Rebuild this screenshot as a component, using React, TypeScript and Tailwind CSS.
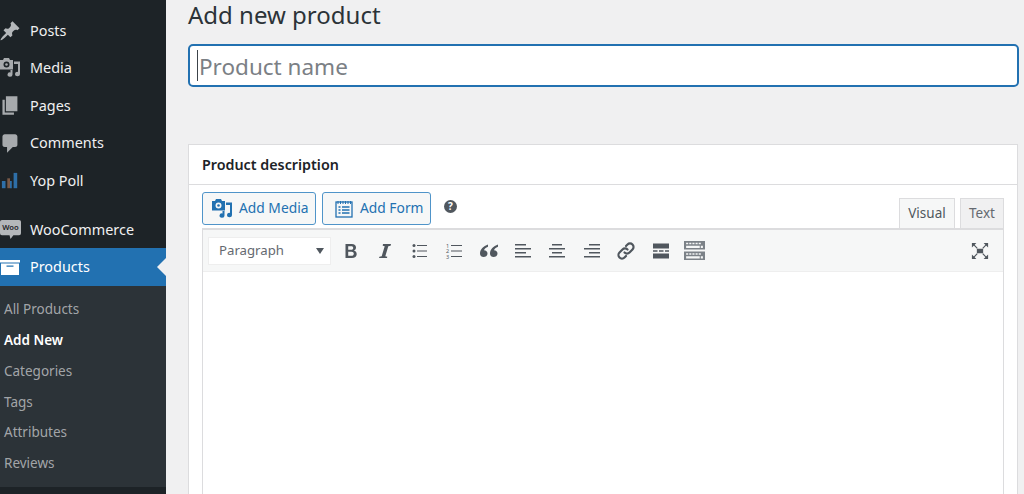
import type { ReactNode } from "react";

const font = { fontFamily: '"Noto Sans", "Open Sans", sans-serif' };

function PinIcon() {
  return (
    <svg viewBox="0 0 20 20" className="w-[22px] h-[22px] text-[#b4b7ba]" fill="currentColor">
      <path d="M10.440 3.020l1.820-1.820 6.360 6.350-1.830 1.820c-1.050-.68-2.480-.57-3.410.36l-.75.75c-.92.930-1.040 2.350-.35 3.410l-1.830 1.820-2.410-2.410-2.800 2.790c-.42.420-3.380 2.710-3.800 2.290s1.860-3.390 2.280-3.810l2.790-2.790L4.100 9.360l1.830-1.820c1.050.690 2.480.570 3.400-.36l.75-.75c.930-.92 1.050-2.350.360-3.410z" />
    </svg>
  );
}

function MediaIcon({ className }: { className: string }) {
  return (
    <svg viewBox="0 0 20 20" className={className} fill="currentColor">
      <path fillRule="evenodd" d="M4 0h5l1 2h3v9.500H0V2h3zM6.500 3.500a3 3 0 100 6 3 3 0 000-6z" />
      <circle cx="6.500" cy="6.500" r="1.300" />
      <path d="M14 3.500h6v12.500a2.500 2.200 0 11-2-2.100V6h-4z" />
      <path d="M10.500 12h2v4.500a2.500 2.200 0 11-2-2.100z" />
    </svg>
  );
}

function PagesIcon() {
  return (
    <svg viewBox="0 0 20 20" className="w-[23px] h-[23px] text-[#a7aaad]" fill="currentColor">
      <path d="M6 15V2h10v13H6zm-1 1h8v2H3V5h2v11z" />
    </svg>
  );
}

function CommentIcon() {
  return (
    <svg viewBox="0 0 20 20" className="w-[23px] h-[23px] text-[#a7aaad]" fill="currentColor">
      <path d="M5 2h9c1.100 0 2 .9 2 2v7c0 1.100-.9 2-2 2h-2l-5 5v-5H5c-1.100 0-2-.9-2-2V4c0-1.100.9-2 2-2z" />
    </svg>
  );
}

function PollIcon() {
  return (
    <svg viewBox="0 0 20 20" className="w-[18px] h-[18px]">
      <path fill="#2e6fa8" d="M1 10h4v8H1z" />
      <path fill="#7a5a48" d="M7 7h3v11H7z" />
      <path fill="#2e6fa8" d="M10 10h2v8h-2z" />
      <path fill="#2e6fa8" d="M14 1h4v17h-4z" />
    </svg>
  );
}

function WooIcon() {
  return (
    <svg viewBox="0 0 22 22" className="w-[21px] h-[21px]">
      <path fill="#b4b7ba" d="M2 1h18a2 2 0 012 2v12a2 2 0 01-2 2h-6l-3 4-1-4H2a2 2 0 01-2-2V3a2 2 0 012-2z" />
      <text x="11" y="12" textAnchor="middle" fontSize="8" fontWeight="600" fill="#1d2327" style={font}>Woo</text>
    </svg>
  );
}

function ProductsIcon() {
  return (
    <svg viewBox="0 0 20 15" className="w-[20px] h-[15px]" fill="#fff">
      <path d="M0 0h20v2.500H0z" />
      <path fillRule="evenodd" d="M1 3.500h18V15H1zM6.500 5.500v1.300h7V5.500z" />
    </svg>
  );
}

function MenuRow({ icon, label, className = "h-[37.500px]" }: { icon: ReactNode; label: string; className?: string }) {
  return (
    <div className={`${className} flex items-center text-[14.400px] text-[#f0f0f1]`}>
      <span className="w-[24px] shrink-0 flex justify-center -ml-[2px] mr-[8px]">{icon}</span>
      {label}
    </div>
  );
}

function Sidebar() {
  const sub = ["All Products", "Add New", "Categories", "Tags", "Attributes", "Reviews"];
  return (
    <aside className="w-[166px] shrink-0 bg-[#1d2327] h-[494px] overflow-hidden pt-[12px]">
      <MenuRow icon={<PinIcon />} label="Posts" />
      <MenuRow icon={<MediaIcon className="w-[20px] h-[20px] text-[#a7aaad]" />} label="Media" />
      <MenuRow icon={<PagesIcon />} label="Pages" />
      <MenuRow icon={<CommentIcon />} label="Comments" />
      <MenuRow icon={<PollIcon />} label="Yop Poll" />
      <div className="h-[12px]" />
      <MenuRow icon={<WooIcon />} label="WooCommerce" className="h-[36.500px]" />
      <div className="relative h-[38px] bg-[#2271b1] flex items-center text-[14.400px] text-white">
        <span className="w-[24px] shrink-0 flex justify-center -ml-[2px] mr-[8px]"><ProductsIcon /></span>
        Products
        <span className="absolute right-0 top-[10px] w-0 h-0 border-y-[9px] border-y-transparent border-r-[9px] border-r-[#f0f0f1]" />
      </div>
      <div className="bg-[#2c3338] h-[201px] pt-[8px]">
        {sub.map((s) => (
          <div
            key={s}
            className={`h-[30.800px] flex items-center pl-[4px] text-[13.500px] ${s === "Add New" ? "text-white font-semibold" : "text-[#c3c4c7]/80"}`}
          >
            {s}
          </div>
        ))}
      </div>
    </aside>
  );
}

function FormIcon() {
  return (
    <svg viewBox="0 0 18 18" className="w-[18px] h-[18px] text-[#2271b1]" fill="none" stroke="currentColor" strokeWidth="1.300">
      <rect x="1" y="2" width="16" height="15" />
      <path d="M3 1v3M5.500 1v3M8 1v3M10.500 1v3M13 1v3M15.500 1v3" strokeWidth="1" />
      <path d="M3.500 7h2M7 7h7.500M3.500 10h2M7 10h7.500M3.500 13h2M7 13h7.500" strokeWidth="1.500" />
    </svg>
  );
}

function Toolbar() {
  const c = "w-[20px] h-[20px] text-[#50575e]";
  return (
    <div className="h-[44px] bg-[#f6f7f7] border-t-2 border-b border-t-[#dcdcde] border-b-[#eeeeee] flex items-center pl-[5px] pr-[13px]">
      <div className="w-[123px] h-[28px] mt-[1px] bg-white border border-[#eeeeee] flex items-center justify-between pl-[10px] pr-[6px] text-[13.200px] text-[#646970]">
        Paragraph
        <span className="w-0 h-0 border-x-[4px] border-x-transparent border-t-[6px] border-t-[#50575e]" />
      </div>
      <div className="flex items-center gap-[14.400px] ml-[10px]">
        <svg viewBox="0 0 20 20" className={c} fill="currentColor">
          <path fillRule="evenodd" d="M4.500 3h6.300c2.700 0 4.200 1.300 4.200 3.400 0 1.500-.8 2.600-2.100 3.100 1.700.4 2.800 1.600 2.800 3.400 0 2.500-1.800 4.100-4.800 4.100H4.500zm2.700 2.200v3.500h3c1.300 0 2-.7 2-1.800s-.7-1.700-2-1.700zm0 5.600v4h3.300c1.500 0 2.300-.7 2.300-2s-.8-2-2.400-2z" />
        </svg>
        <svg viewBox="0 0 20 20" className={c} fill="currentColor">
          <path d="M8 3h8l-.4 1.700-2.300.5-3 10 2 .6L12 17H4l.4-1.200 2.300-.6 3-10-2-.5z" />
        </svg>
        <svg viewBox="0 0 20 20" className={c} fill="currentColor">
          <circle cx="4" cy="4.500" r="1.500" /><circle cx="4" cy="10" r="1.500" /><circle cx="4" cy="15.500" r="1.500" />
          <path d="M7 4h10v1.100H7zM7 9.500h10v1.100H7zM7 15h10v1.100H7z" />
        </svg>
        <svg viewBox="0 0 20 20" className={c} fill="currentColor">
          <path d="M7 4h11v1.100H7zM7 9.500h11v1.100H7zM7 15h11v1.100H7z" />
          <text x="2" y="6.500" fontSize="5.500" style={font}>1</text>
          <text x="2" y="12" fontSize="5.500" style={font}>2</text>
          <text x="2" y="17.500" fontSize="5.500" style={font}>3</text>
        </svg>
        <svg viewBox="0 0 20 20" className={c} fill="currentColor">
          <path d="M9 3.500C4.500 5.200 1 8.200 1 12.500c0 2 1.400 3.500 3.600 3.500S8.500 14.500 8.500 12.500s-1.500-3.300-3.500-3.300c.4-1.500 1.800-2.600 4-3.500zM19 3.500c-4.500 1.700-8 4.700-8 9 0 2 1.400 3.500 3.600 3.500s3.900-1.500 3.900-3.500-1.500-3.300-3.500-3.300c.4-1.500 1.800-2.600 4-3.500z" />
        </svg>
        <svg viewBox="0 0 20 20" className={c} fill="currentColor">
          <path d="M2 3h11v1.500H2zM2 7h16v1.500H2zM2 11h11v1.500H2zM2 15h16v1.500H2z" />
        </svg>
        <svg viewBox="0 0 20 20" className={c} fill="currentColor">
          <path d="M5 3h10v1.500H5zM2 7h16v1.500H2zM5 11h10v1.500H5zM2 15h16v1.500H2z" />
        </svg>
        <svg viewBox="0 0 20 20" className={c} fill="currentColor">
          <path d="M7 3h11v1.500H7zM2 7h16v1.500H2zM7 11h11v1.500H7zM2 15h16v1.500H2z" />
        </svg>
        <svg viewBox="0 0 20 20" className={c} fill="none" stroke="currentColor" strokeWidth="2.200" strokeLinecap="round">
          <path d="M8.500 11.500a3.500 3.500 0 005 0l3-3a3.500 3.500 0 00-5-5l-1.500 1.500" />
          <path d="M11.500 8.500a3.500 3.500 0 00-5 0l-3 3a3.500 3.500 0 005 5l1.500-1.500" />
        </svg>
        <svg viewBox="0 0 20 20" className={c} fill="currentColor">
          <path d="M2 2.500h16v5H2zM2 9.200h4.500v1.600H2zM8 9.200h4.500v1.600H8zM14 9.200h4v1.600h-4zM2 12.500h16v5H2z" />
        </svg>
        <svg viewBox="0 0 20 20" className="w-[21px] h-[21px] text-[#7c8288] -ml-[0.500px]" fill="currentColor">
          <path fillRule="evenodd" d="M0 1h20v8H0zM2 2.500v1.500h2V2.500zM5 2.500v1.500h2V2.500zM8 2.500v1.500h2V2.500zM11 2.500v1.500h2V2.500zM14 2.500v1.500h2V2.500zM2 5.500v2h13v-2zM16 5.500v2h2v-2z" />
          <path fillRule="evenodd" d="M0 11h20v8H0zM2 12.500v1.500h2v-1.500zM5 12.500v1.500h2v-1.500zM8 12.500v1.500h2v-1.500zM11 12.500v1.500h2v-1.500zM14 12.500v1.500h2v-1.500zM2 15.500v2h13v-2zM16 15.500v2h2v-2z" />
        </svg>
      </div>
      <svg viewBox="0 0 20 20" className="ml-auto w-[20px] h-[18px] text-[#50575e]" fill="currentColor" stroke="currentColor" strokeWidth="0">
        <path d="M1 1h5L1 6zM19 1v5l-5-5zM1 19v-5l5 5zM19 19h-5l5-5z" />
        <path d="M3 3l4 4M17 3l-4 4M3 17l4-4M17 17l-4-4" strokeWidth="1.300" />
        <path d="M6.500 7.500h7v5h-7z" />
      </svg>
    </div>
  );
}

export default function App() {
  return (
    <div className="flex w-[1024px] h-[494px] overflow-hidden bg-[#f0f0f1]" style={font}>
      <Sidebar />
      <main className="flex-1 min-w-0 pl-[22px] pr-[5px]">
        <h1 className="text-[24px] leading-[30px] text-[#2c3338] h-[44px]">Add new product</h1>
        <div className="h-[43px] bg-white border-2 border-[#2271b1] rounded-[5px] flex items-center pl-[7px] text-[22.500px] text-[#7b8085]">
          <span className="w-[1px] h-[31px] bg-[#3c434a] mr-[1px]" />
          <span className="relative top-[1px]">Product name</span>
        </div>
        <section className="mt-[57px] h-[400px] w-[830px] bg-white border border-[#dcdcde]">
          <div className="h-[40px] border-b border-[#dcdcde] flex items-center pl-[13px] text-[14.300px] font-semibold text-[#1d2327]">
            Product description
          </div>
          <div className="px-[13px]">
            <div className="flex h-[43px] pt-[7px] text-[13.800px]">
              <button className="h-[33px] w-[114px] pl-[9px] flex items-center gap-[7px] bg-[#f6f7f7] border border-[#4f94c9] rounded-[3px] text-[#2271b1]">
                <MediaIcon className="w-[20px] h-[20px] text-[#2271b1]" />
                Add Media
              </button>
              <button className="h-[33px] w-[109px] ml-[6px] pl-[12px] flex items-center gap-[7px] bg-[#f6f7f7] border border-[#4f94c9] rounded-[3px] text-[#2271b1]">
                <FormIcon />
                Add Form
              </button>
              <span className="ml-[13px] mt-[8px] w-[13px] h-[13px] rounded-full bg-[#50575e] text-white text-[10px] leading-[13px] font-bold text-center">?</span>
              <div className="ml-auto flex items-start gap-[5px] pt-[6px]">
                <span className="h-[31px] w-[56px] pb-[2px] flex items-center justify-center bg-[#f6f7f7] border border-b-0 border-[#dcdcde] text-[13.500px] text-[#50575e]">Visual</span>
                <span className="h-[31px] w-[44px] pb-[2px] flex items-center justify-center bg-[#f0f0f1] border border-b-0 border-[#dcdcde] text-[13.500px] text-[#646970]">Text</span>
              </div>
            </div>
            <div className="relative border-x border-[#dcdcde] h-[300px]">
              <Toolbar />
            </div>
          </div>
        </section>
      </main>
    </div>
  );
}
